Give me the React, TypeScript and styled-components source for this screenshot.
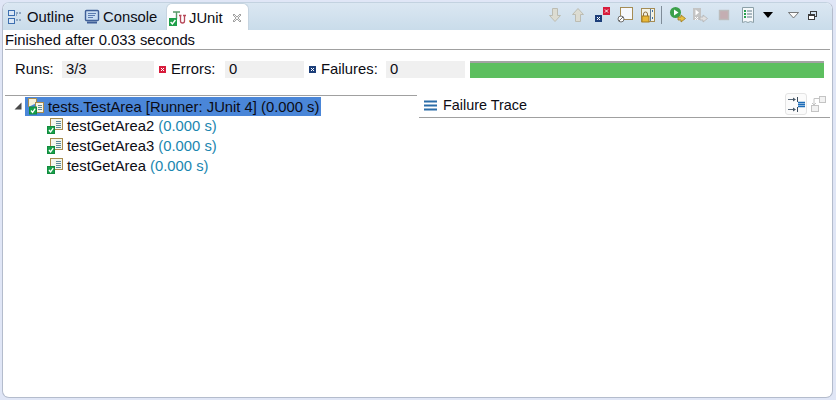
import React from 'react';
import styled, { createGlobalStyle } from 'styled-components';

const GlobalStyle = createGlobalStyle`
  html, body {
    margin: 0;
    padding: 0;
    background: #e0e6f6;
  }
  body {
    font-family: 'Liberation Sans', Arial, sans-serif;
    font-size: 14.8px;
    color: #0c0c14;
  }
`;

const Window = styled.div`
  width: 836px;
  height: 400px;
  box-sizing: border-box;
  padding: 2px;
  overflow: hidden;
`;

const Frame = styled.div`
  height: 396px;
  width: 831px;
  box-sizing: border-box;
  display: flex;
  flex-direction: column;
  border: 1px solid #b4bccc;
  border-top-color: #c3d2e0;
  border-radius: 7px;
  background: #ffffff;
  overflow: hidden;
`;

const TabBar = styled.div`
  height: 27px;
  flex: none;
  display: flex;
  align-items: stretch;
  background: linear-gradient(to bottom, #dbe7f2, #c9dcea);
`;

const Tab = styled.div`
  display: flex;
  align-items: center;
  height: 27px;
  box-sizing: border-box;
  padding-top: 1px;
`;

const OutlineTab = styled(Tab)`
  width: 79px;
  padding-left: 4px;
`;

const ConsoleTab = styled(Tab)`
  width: 82px;
  padding-left: 2px;
`;

const ActiveTab = styled(Tab)`
  width: 83px;
  margin-left: 2px;
  padding-left: 1px;
  background: #ffffff;
  border: 1px solid #c6d4e0;
  border-bottom: none;
  border-radius: 6px 6px 0 0;
`;

const TabLabel = styled.span<{ $gap: number }>`
  margin-left: ${props => props.$gap}px;
`;

const CloseIcon = styled.svg`
  margin-left: 9px;
`;

const Toolbar = styled.div`
  margin-left: auto;
  display: flex;
  align-items: center;
  padding: 0 15px 3px 0;
`;

const ToolIcon = styled.svg<{ $gap?: number }>`
  display: block;
  flex: none;
  margin-left: ${props => props.$gap ?? 0}px;
`;

const ToolSeparator = styled.div`
  width: 1px;
  height: 18px;
  background: #7f8c98;
  margin-left: 5px;
`;

const Body = styled.div`
  flex: 1;
  display: flex;
  flex-direction: column;
  padding: 0 2px;
  min-height: 0;
`;

const StatusLine = styled.div`
  height: 20px;
  line-height: 21px;
  box-sizing: border-box;
  border-bottom: 1px solid #a0a0a0;
`;

const CountersRow = styled.div`
  display: flex;
  align-items: center;
  height: 18px;
  margin-top: 10px;
  padding-left: 10px;
`;

const CounterLabel = styled.span<{ $width: number }>`
  width: ${props => props.$width}px;
  flex: none;
`;

const CounterField = styled.div<{ $width: number }>`
  width: ${props => props.$width}px;
  flex: none;
  height: 17px;
  line-height: 17px;
  margin-top: 1px;
  background: #f0f0f0;
  padding-left: 4px;
  box-sizing: border-box;
`;

const StatusIcon = styled.svg`
  flex: none;
  margin-left: 5px;
  margin-right: 5px;
`;

const ProgressBar = styled.div`
  flex: none;
  width: 354px;
  height: 17px;
  margin-left: 5px;
  box-sizing: border-box;
  border-top: 2px solid #a4a4a4;
  background: #5dbf5f;
`;

const Panes = styled.div`
  flex: 1;
  display: flex;
  margin-top: 17px;
  min-height: 0;
`;

const TreePane = styled.div`
  width: 412px;
  flex: none;
  border-top: 1px solid #a0a0a0;
`;

const TreeRow = styled.div`
  display: flex;
  align-items: center;
  height: 20px;
  white-space: nowrap;
`;

const RootRow = styled(TreeRow)`
  align-items: flex-end;
`;

const ChildRow = styled(TreeRow)`
  padding-left: 42px;
`;

const Arrow = styled.svg`
  flex: none;
  margin: 0 3px 6px 9px;
`;

const Selection = styled.div`
  width: 296px;
  height: 19px;
  flex: none;
  display: flex;
  align-items: center;
  padding-left: 3px;
  box-sizing: border-box;
  background: #4a86d8;
  overflow: hidden;
`;

const RowIcon = styled.svg`
  flex: none;
`;

const RowText = styled.span`
  margin-left: 4px;
`;

const Timing = styled.span`
  color: #1a86b0;
`;

const TracePane = styled.div`
  flex: 1;
  margin: -2px 0 0 2px;
  height: 25px;
  display: flex;
  align-items: center;
  border-bottom: 1px solid #a0a0a0;
  box-sizing: border-box;
  padding-left: 5px;
`;

const TraceTitle = styled.span`
  margin-left: 6px;
  font-size: 14.4px;
`;

const TraceTools = styled.div`
  margin-left: auto;
  display: flex;
  align-items: center;
  padding: 0 4px 3px 0;
`;

const ToggleButton = styled.div`
  width: 22px;
  height: 22px;
  box-sizing: border-box;
  border: 1px solid #e4e4e4;
  border-radius: 3px;
  background: #fbfbfb;
  display: flex;
  align-items: center;
  justify-content: center;
`;

const OutlineIcon = () => (
  <svg width="16" height="16" viewBox="0 0 16 16">
    <rect x="1.5" y="1.5" width="6" height="5" fill="#dce8f6" stroke="#3d6fb0" />
    <rect x="1.5" y="9.5" width="6" height="5" fill="#dce8f6" stroke="#3d6fb0" />
    <path d="M9 4h2M12 4h2M9 6h1M9 11h2M12 11h2" stroke="#4d6f95" />
  </svg>
);

const ConsoleIcon = () => (
  <svg width="16" height="16" viewBox="0 0 16 16">
    <rect x="1.5" y="1.5" width="13" height="10" rx="1" fill="#c8dcf2" stroke="#3f5f98" strokeWidth="1.4" />
    <path d="M4 4.500h8M4 6.500h7M4 8.500h5" stroke="#5b7cb0" />
    <path d="M3 13.500h10" stroke="#3f5f98" strokeWidth="2" />
  </svg>
);

const JUnitIcon = () => (
  <svg width="18" height="18" viewBox="0 0 18 18">
    <path d="M5 3h7M8.500 3v7" stroke="#5a9a6a" strokeWidth="1.4" fill="none" />
    <path d="M11 6.500h2.500M15 6.500h3M12.500 7v5a2 2 0 0 0 4 0V7" stroke="#b84a5a" strokeWidth="1.3" fill="none" />
    <rect x="1" y="9" width="8" height="8" fill="#1fa04a" />
    <path d="M2.600 13l1.800 2 3-4" stroke="#ffffff" strokeWidth="1.4" fill="none" />
  </svg>
);

const TestBadge = () => (
  <>
    <rect x="0.500" y="8.500" width="7" height="7" fill="#17a04a" stroke="#128a3e" />
    <path d="M2 12l1.600 1.900 2.600-3.700" stroke="#ffffff" strokeWidth="1.3" fill="none" />
  </>
);

const TestIcon = () => (
  <RowIcon width="16" height="16" viewBox="0 0 16 16">
    <rect x="3.500" y="0.500" width="12" height="11" fill="#f4f6ee" stroke="#a88c4e" />
    <path d="M9 3.500h5M9 5.500h5M9 7.500h5M9 9.500h5" stroke="#5c8a9a" />
    <TestBadge />
  </RowIcon>
);

const SuiteIcon = () => (
  <RowIcon width="16" height="17" viewBox="0 0 16 17">
    <path d="M0.500 9V0.500h8V5" fill="#f4f0dc" stroke="#a88c4e" />
    <rect x="7.500" y="4.500" width="8" height="10" fill="#f8f4e4" stroke="#a88c4e" />
    <path d="M10 7.500h4M10 9.500h4M10 11.500h4" stroke="#5c8a9a" />
    <g transform="translate(1 0.500)">
      <TestBadge />
    </g>
  </RowIcon>
);

const ArrowIcon = ({ up, gap }: { up?: boolean; gap?: number }) => (
  <ToolIcon $gap={gap} width="16" height="16" viewBox="0 0 16 16">
    <path
      d={up ? 'M8 1.500l5.500 6H10.500v7h-5v-7H2.500z' : 'M8 14.500l5.500-6H10.500v-7h-5v7H2.500z'}
      fill="#dcdcd2"
      stroke="#bcbcb2"
    />
  </ToolIcon>
);

const MarkSquare = ({ fill }: { fill: string }) => (
  <StatusIcon width="7" height="7" viewBox="0 0 7 7">
    <rect width="7" height="7" fill={fill} />
    <path d="M2 2l3 3M5 2L2 5" stroke="#ffffff" />
  </StatusIcon>
);

const App: React.FC = () => {
  return (
    <Window>
      <GlobalStyle />
      <Frame>
        <TabBar>
          <OutlineTab>
            <OutlineIcon />
            <TabLabel $gap={4}>Outline</TabLabel>
          </OutlineTab>
          <ConsoleTab>
            <ConsoleIcon />
            <TabLabel $gap={3}>Console</TabLabel>
          </ConsoleTab>
          <ActiveTab>
            <JUnitIcon />
            <TabLabel $gap={3}>JUnit</TabLabel>
            <CloseIcon width="10" height="10" viewBox="0 0 10 10">
              <path d="M1 2l1-1 3 3 3-3 1 1-3 3 3 3-1 1-3-3-3 3-1-1 3-3z" fill="#f4f4f4" stroke="#8c8c8c" strokeWidth="0.8" />
            </CloseIcon>
          </ActiveTab>
          <Toolbar>
            <ArrowIcon />
            <ArrowIcon up gap={7} />
            <ToolIcon $gap={8} width="16" height="16" viewBox="0 0 16 16">
              <rect x="9" y="0" width="7" height="8" fill="#d81c3c" />
              <path d="M11 2.500l3 3M14 2.500l-3 3" stroke="#fff" />
              <rect x="1" y="8" width="7" height="7" fill="#1d3f7a" />
              <path d="M3 10l3 3M6 10l-3 3" stroke="#fff" />
            </ToolIcon>
            <ToolIcon $gap={7} width="16" height="16" viewBox="0 0 16 16">
              <rect x="3.500" y="0.500" width="12" height="12" fill="#f6f8fc" stroke="#a58c54" />
              <circle cx="4" cy="12" r="3" fill="#fff" stroke="#707070" />
              <path d="M2 14l4-4" stroke="#707070" />
            </ToolIcon>
            <ToolIcon $gap={7} width="16" height="16" viewBox="0 0 16 16">
              <rect x="1.500" y="1.500" width="13" height="13" fill="#f2f2e6" stroke="#a58c54" />
              <path d="M10.500 2v12" stroke="#5a7a9a" />
              <path d="M12 4h1M12 11h1" stroke="#3f6f9f" strokeWidth="2" />
              <rect x="2" y="9" width="7" height="6" fill="#e8b838" stroke="#a57c20" />
              <path d="M3.500 9V7a2 2 0 0 1 4 0v2" stroke="#8c7040" fill="none" />
            </ToolIcon>
            <ToolSeparator />
            <ToolIcon $gap={7} width="18" height="18" viewBox="0 0 18 18">
              <circle cx="6.500" cy="6.500" r="5.500" fill="#3ba04a" />
              <path d="M5 3.500l4.500 3-4.500 3z" fill="#ffffff" />
              <path d="M9 11h3V9l4.500 3.500L12 16v-2H9z" fill="#e8c040" stroke="#9c7a20" strokeWidth="0.8" />
            </ToolIcon>
            <ToolIcon $gap={4} width="18" height="18" viewBox="0 0 18 18">
              <rect x="2" y="2" width="8" height="12" fill="#c4c4c4" />
              <path d="M4.500 3.500l3.500 3-3.500 3z" fill="#ffffff" />
              <path d="M4 11l3 3M7 11l-3 3" stroke="#ffffff" />
              <path d="M9 11h3V9l4.500 3.500L12 16v-2H9z" fill="#e0e0e0" stroke="#b4b4b4" strokeWidth="0.8" />
            </ToolIcon>
            <ToolIcon $gap={8} width="14" height="14" viewBox="0 0 14 14">
              <rect x="2.500" y="2.500" width="9" height="9" fill="#c4aeb2" stroke="#bcbcbc" strokeWidth="1.400" />
            </ToolIcon>
            <ToolIcon $gap={9} width="16" height="18" viewBox="0 0 16 18">
              <path d="M2.500 1.500h11v15l-3-1-2.500 1-2.500-1-3 1z" fill="#f4f8fa" stroke="#8ca0a8" />
              <path d="M7 5h5M7 8h5M7 11h5" stroke="#607a88" />
              <path d="M4 5h2M4 8h2M4 11h2" stroke="#28a050" strokeWidth="2" />
            </ToolIcon>
            <ToolIcon $gap={7} width="10" height="6" viewBox="0 0 10 6">
              <path d="M0 0h10L5 6z" fill="#000000" />
            </ToolIcon>
            <ToolIcon $gap={15} width="11" height="7" viewBox="0 0 11 7">
              <path d="M0.500 0.500h10L5.500 6z" fill="#fafafa" stroke="#5a5a5a" strokeWidth="0.800" />
            </ToolIcon>
            <ToolIcon $gap={9} width="9" height="9" viewBox="0 0 9 9">
              <rect x="2.500" y="0.500" width="6" height="5" fill="none" stroke="#3c3c3c" />
              <rect x="0.500" y="3.500" width="6" height="5" fill="#fff" stroke="#3c3c3c" />
              <path d="M1 4.500h5" stroke="#3c3c3c" />
            </ToolIcon>
          </Toolbar>
        </TabBar>
        <Body>
          <StatusLine>Finished after 0.033 seconds</StatusLine>
          <CountersRow>
            <CounterLabel $width={47}>Runs:</CounterLabel>
            <CounterField $width={92}>3/3</CounterField>
            <MarkSquare fill="#d81c3c" />
            <CounterLabel $width={54}>Errors:</CounterLabel>
            <CounterField $width={79}>0</CounterField>
            <MarkSquare fill="#1d3f7a" />
            <CounterLabel $width={65}>Failures:</CounterLabel>
            <CounterField $width={79}>0</CounterField>
            <ProgressBar />
          </CountersRow>
          <Panes>
            <TreePane>
              <RootRow>
                <Arrow width="8" height="8" viewBox="0 0 8 8">
                  <path d="M7.500 0.500v7H0.500z" fill="#4a4a4a" />
                </Arrow>
                <Selection>
                  <SuiteIcon />
                  <RowText>tests.TestArea [Runner: JUnit 4] (0.000 s)</RowText>
                </Selection>
              </RootRow>
              {['testGetArea2', 'testGetArea3', 'testGetArea'].map(name => (
                <ChildRow key={name}>
                  <TestIcon />
                  <RowText>
                    {name} <Timing>(0.000 s)</Timing>
                  </RowText>
                </ChildRow>
              ))}
            </TreePane>
            <TracePane>
              <svg width="13" height="11" viewBox="0 0 13 11">
                <path d="M0 1.500h13M0 5.500h13M0 9.500h13" stroke="#2a6ca8" strokeWidth="2" />
              </svg>
              <TraceTitle>Failure Trace</TraceTitle>
              <TraceTools>
                <ToggleButton>
                  <svg width="18" height="18" viewBox="0 0 18 18">
                    <path d="M1 4.500h7M1 14.500h7" stroke="#5a6a7a" />
                    <path d="M6 2.500l3 2-3 2zM6 12.500l3 2-3 2z" fill="#4a5a6a" />
                    <path d="M10.500 2v5M10.500 12v5" stroke="#3c4c5c" />
                    <path d="M11 7.500h7M11 9.500h7M11 11.500h7" stroke="#1c6cb8" strokeWidth="1.400" />
                  </svg>
                </ToggleButton>
                <ToolIcon $gap={3} width="16" height="18" viewBox="0 0 16 18">
                  <rect x="9.500" y="1.500" width="6" height="6" fill="#f2f2f2" stroke="#c4c4c4" />
                  <rect x="1.500" y="10.500" width="7" height="6" fill="#f2f2f2" stroke="#c4c4c4" />
                  <path d="M9 3.500H4v6M2 8l2 2 2-2" stroke="#c4c4c4" fill="none" />
                </ToolIcon>
              </TraceTools>
            </TracePane>
          </Panes>
        </Body>
      </Frame>
    </Window>
  );
};

export default App;
